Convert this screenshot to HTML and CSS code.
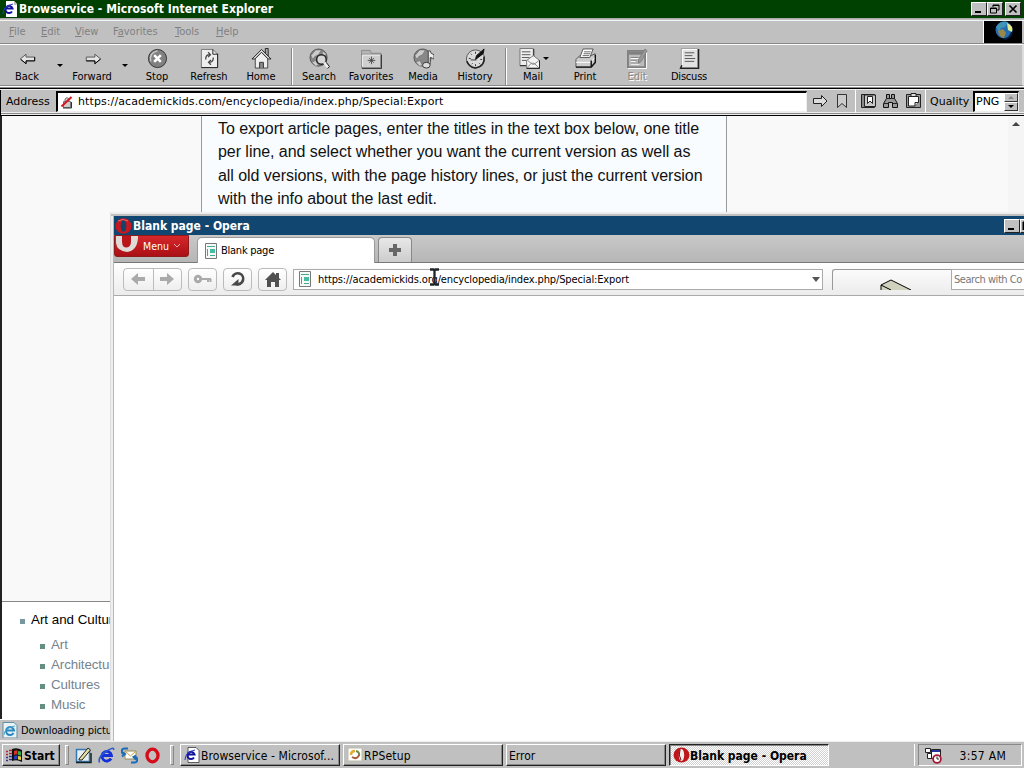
FILE: index.html
```
<!DOCTYPE html>
<html lang="en"><head><meta charset="utf-8"><title>Desktop</title><link rel="stylesheet" href="styles.css"></head>
<body>
<div class="desktop">
<main class="ie">
 <header class="title ie-title">
  <svg width="16" height="16" viewBox="0 0 16 16"><path d="M4 0h8l3 3v13H4z" fill="#fff"/><path d="M12 0v4h3" fill="#bbb"/><path d="M10 10.5A3.600 3.600 0 1 1 10.500 7.500H4" fill="none" stroke="#11129b" stroke-width="2"/><path d="M1 13Q1 5 11 3" fill="none" stroke="#2837cf"/></svg>
  <span class="t-ie">Browservice - Microsoft Internet Explorer</span>
  <div class="wbtns"><i><svg width="14" height="12"><path d="M3 9h6" stroke="#000" stroke-width="2"/></svg></i><i><svg width="14" height="12"><path d="M5 4V2h6v5H9M5 2.500h6M2.500 5h6v5h-6zM2 5.500h7" fill="none" stroke="#000"/></svg></i><i class="x"><svg width="14" height="12"><path d="M3.500 2.500l7 7m0-7l-7 7" stroke="#000" stroke-width="1.700"/></svg></i></div>
 </header>
 <nav class="menu"><div class="items"><span><u>F</u>ile</span><span><u>E</u>dit</span><span><u>V</u>iew</span><span>F<u>a</u>vorites</span><span><u>T</u>ools</span><span><u>H</u>elp</span></div>
  <div class="throb"><svg width="38" height="22"><circle cx="20" cy="9" r="8.500" fill="#246db0"/><path d="M12 6q5-7 12-5l-3 5-4 1-2 4z" fill="#3f94b8"/><path d="M14 10l5-2 3 4-2 5q-5-1-6-7" fill="#9a874b"/><path d="M23 2q7 3 5 9l-4-2z" fill="#e4ec8d"/><path d="M28 11q-2 7-8 7" stroke="#081c3c" stroke-width="2" fill="none"/></svg></div></nav>
 <div class="tools">
  <div class="tb"><svg viewBox="0 0 22 22"><path d="M3.500 11.500l6-5v3h9v4h-9v3z" fill="#e4e4e4" stroke="#555"/><path d="M4 12l5.500 4.500v-3h9v-4" fill="none" stroke="#000"/></svg><b>Back</b></div><div class="dd"></div>
  <div class="tb"><svg viewBox="0 0 22 22"><path d="M19.500 11.500l-6-5v3h-9v4h9v3z" fill="#e4e4e4" stroke="#555"/><path d="M19.500 11.500l-6 5v-3h-9" fill="none" stroke="#000"/></svg><b>Forward</b></div><div class="dd"></div>
  <div class="tb"><svg viewBox="0 0 22 22"><circle cx="11" cy="11" r="9.500" fill="#808080" stroke="#333"/><path d="M4 14Q2 5 11 3" fill="none" stroke="#ccc" stroke-width="1.500"/><path d="M7.500 7.500l7 7m0-7l-7 7" stroke="#fff" stroke-width="2.700"/></svg><b>Stop</b></div>
  <div class="tb"><svg viewBox="0 0 22 22"><path d="M2.500 1.500h12l5 5v14h-17z" fill="#eee" stroke="#777"/><path d="M19.500 6v14.500h-17M14.500 1.500v5h5" fill="none" stroke="#222"/><path d="M7 12q0-5 4-5m-1.500-2.500L12 7l-2.500 2.500M15 10q0 5-4 5m1.500-2.500L10 15l2.500 2.500" fill="none" stroke="#444" stroke-width="1.300"/></svg><b>Refresh</b></div>
  <div class="tb"><svg viewBox="0 0 22 22"><path d="M15 6V.5h3v8" fill="#aaa" stroke="#222"/><path d="M4.500 11v10h13V11L11 4z" fill="#eee" stroke="#444"/><path d="M1 11.500L11 1.500l10 10h-3l-7-7-7 7z" fill="#ddd" stroke="#222"/><path d="M9 21v-6h4v6" fill="#888" stroke="#333"/></svg><b>Home</b></div>
  <div class="sep"></div>
  <div class="tb"><svg viewBox="0 0 22 22"><circle cx="10" cy="10" r="9" fill="#888" stroke="#555"/><path d="M2 8l5-6h6l-3 5-4 2-2 3zM3 15l4-2 3 5-3 1zM14 3l4 3-1 4-3-3z" fill="#ccc" stroke="#666" stroke-width=".6"/><circle cx="13" cy="12" r="5" fill="#d7d7d7" stroke="#222" stroke-width="1.500"/><path d="M16 15l4 5" stroke="#eee" stroke-width="3"/><path d="M18 15l3.500 4.500-2 2" stroke="#111" fill="none"/></svg><b>Search</b></div>
  <div class="tb"><svg viewBox="0 0 22 22"><path d="M.5 6V2.500h9l1.500 3h10v15H.5z" fill="#b5b5b5" stroke="#888"/><path d="M.5 6.500h20v14H.5z" fill="#cfcfcf" stroke="#888"/><path d="M1.500 19V7.500H20" fill="none" stroke="#eee"/><path d="M21.500 7v14.500H1" stroke="#333" fill="none"/><path d="M11 9v8m-4-4h8m-6.500-2.500l5 5m0-5l-5 5" stroke="#444" stroke-width=".9"/></svg><b>Favorites</b></div>
  <div class="tb"><svg viewBox="0 0 22 22"><circle cx="10" cy="10" r="9" fill="#888" stroke="#555"/><path d="M2 8l5-6h6l-3 5-4 2-2 3zM3 15l4-2 3 5-3 1z" fill="#ccc" stroke="#666" stroke-width=".6"/><path d="M16 17V3h2q0 3 4 4v5q-1-2-4-2v7" stroke="#333" fill="#eee" stroke-width=".9"/><ellipse cx="14" cy="18" rx="4" ry="3" fill="#ddd" stroke="#333"/></svg><b>Media</b></div>
  <div class="tb"><svg viewBox="0 0 22 22"><circle cx="11" cy="11.500" r="9.500" fill="#dadada" stroke="#555"/><path d="M20 9q1 10-9 12-7-1-9-7" fill="none" stroke="#222" stroke-width="1.700"/><path d="M11 4v2m0 11v2M4 11h2m10 1h2M6 6l1 1m0 10l1-1m7 0l1 1" stroke="#333"/><path d="M11 12l1-4 8-7-1 5z" fill="#111" stroke="#111"/><path d="M6 12.500h6" stroke="#333"/></svg><b>History</b></div>
  <div class="sep s2"></div>
  <div class="tb mail"><svg viewBox="0 0 22 22"><path d="M1 .5h14v18H1z" fill="#eee" stroke="#777"/><path d="M15.500 1v9M1 18.500h7" stroke="#222"/><path d="M3 4h9M3 7h9M3 10h8M3 13h6" stroke="#555"/><path d="M8 13l7-5 6.500 5v8H8z" fill="#f4f4f4" stroke="#777"/><path d="M8 21l5-5h3l5 5M9 13l5 4h2l5-4" fill="none" stroke="#888"/><path d="M21.500 13v8.500H8" fill="none" stroke="#222"/></svg><b>Mail</b><em class="dd"></em></div>
  <div class="tb"><svg viewBox="0 0 22 22"><path d="M1 12l4-4h12l4-2v9l-4 5H1z" fill="#ccc" stroke="#555"/><path d="M5 10L8.500 1H19l-3.500 9z" fill="#fff" stroke="#555"/><path d="M9.500 4h7M9 6h7M8 8h7" stroke="#666"/><path d="M1 15h15l5-5" fill="none" stroke="#fff"/><path d="M1 20h16l4.500-5V7M17 13v7" fill="none" stroke="#111" stroke-width="1.500"/></svg><b>Print</b></div>
  <div class="tb off"><svg viewBox="0 0 22 22"><path d="M1 3h18v17H1z" fill="#bbb" stroke="#808080" stroke-width="2"/><path d="M2 4h17v3H2z" fill="#808080"/><path d="M4 10h8m-8 3h6m-6 3h9" stroke="#808080"/><path d="M19 1l-7 11v4l3-2 6-11z" stroke="#808080" fill="#999"/><path d="M20.500 5v16.500H1M4 11h8m-8 3h5m-5 3h9" fill="none" stroke="#fff"/></svg><b>Edit</b></div>
  <div class="tb disc"><svg viewBox="0 0 22 22"><path d="M2.500.5h17v20h-17z" fill="#e2e2e2" stroke="#999"/><path d="M3.500 18V1.500H19" fill="none" stroke="#fff"/><path d="M20.500 1v20.500H1.500L3 18" fill="none" stroke="#222" stroke-width="1.500"/><path d="M6 5h10M6 8h8M6 11h11M6 14h10" stroke="#555"/></svg><b>Discuss</b></div>
 </div>
 <div class="addr"><span class="addr-label">Address</span>
  <div class="field"><svg width="14" height="14"><path d="M3.500 6.500h7v6h-7zM5 6V4q2-3 4 0v2" fill="#ccc" stroke="#777"/><path d="M1.500 11.500l10-9.500" stroke="#d51622" stroke-width="2"/><path d="M3 13h8.500V7" stroke="#333" fill="none"/></svg><span class="url1">https://academickids.com/encyclopedia/index.php/Special:Export</span></div>
  <svg class="aicon go" width="17" height="16"><path d="M1.500 5.500h8v-3l5.500 5.500-5.500 5.500v-3h-8z" fill="#ddd" stroke="#222"/></svg>
  <svg class="aicon bm" width="12" height="16"><path d="M1.500 1.500h9v13L6 10.500l-4.500 4z" fill="#ccc" stroke="#333"/></svg>
  <div class="vsep"></div>
  <svg class="aicon bk" width="16" height="16"><path d="M.5 1.500h13v13H.5z" fill="#888" stroke="#222"/><path d="M3.500 2v11.500h11V2z" fill="#c8c8c8" stroke="#222"/><path d="M6.500 3.500h5v7L9 8l-2.500 2.500z" fill="#fff" stroke="#222"/></svg>
  <svg class="aicon bi" width="18" height="16"><path d="M4.500 1.500h3v4h2v-4h3v4l3 5v4h-5v-5h-4v5h-5v-4l3-5z" fill="#999" stroke="#111"/><path d="M2 10.500h4m5 0h4M5 5.500h3m2 0h3" stroke="#222"/></svg>
  <svg class="aicon cp" width="16" height="16"><path d="M.5 1.500h14v13H.5z" fill="#999" stroke="#222"/><path d="M2.500 3.500h10v6l-3.500 3.500H2.500z" fill="#fff" stroke="#222"/><path d="M5 .500h5v3H5zM9 13V9.500h3.500" fill="#ddd" stroke="#222"/></svg>
  <div class="vsep v2"></div><span class="quality">Quality</span><div class="png"><span>PNG</span><div class="spin"><i class="up"></i><i class="dn"></i></div></div>
 </div>
 <section class="view">
  <article><p>To export article pages, enter the titles in the text box below, one title<br>per line, and select whether you want the current version as well as<br>all old versions, with the page history lines, or just the current version<br>with the info about the last edit.</p></article>
  <div class="scroll"></div>
  <div class="topics"><div class="head">Art and Culture</div><ul><li>Art</li><li>Architecture</li><li>Cultures</li><li>Music</li></ul></div>
 </section>
 <footer class="status"><svg width="16" height="16"><path d="M1 .5h11l3 3V16H1z" fill="#e9f2f5" stroke="#628da3"/><path d="M11.500 11A4 4 0 1 1 12 8.500H5" stroke="#2988bd" stroke-width="2" fill="none"/><path d="M2 13Q2 6 13 4" fill="none" stroke="#4aa3d0"/></svg><span>Downloading picture</span></footer>
</main>
<section class="opera">
 <header class="title op-title"><svg width="17" height="16"><ellipse cx="8.500" cy="8" rx="8" ry="7.800" fill="#c51820"/><ellipse cx="8.500" cy="8" rx="2.800" ry="6" fill="#12446c"/><path d="M3 3q5-3 10 0" stroke="#f06a68" fill="none"/></svg><span class="t-op">Blank page - Opera</span><div class="wbtns"><i><svg width="14" height="12"><path d="M3 9h6" stroke="#000" stroke-width="2"/></svg></i><i><svg width="14" height="12"><path d="M2.500 2v8M2 2.500h9" stroke="#000" stroke-width="2"/></svg></i></div></header>
 <div class="tabs"><div class="omenu"><svg width="24" height="17"><path d="M1 0h22v2q-1 13-11 14Q2 15 1 7z" fill="#dedbd8"/><path d="M7 0h9v5q0 6-4.500 6.500T7 5z" fill="#bb151c"/></svg><span>Menu</span><svg width="8" height="6"><path d="M1 1l3 3 3-3" fill="none" stroke="#edb0a8"/></svg></div>
  <div class="tab"><svg class="page" width="12" height="16"><path d="M.5.5h11v15H.5z" fill="#f5faf8" stroke="#777"/><path d="M2 3.500h8M2.500 6v7M5 12.500h5" stroke="#45a98f"/><path d="M5 6h5v4H5z" fill="#45bda0"/></svg><span>Blank page</span></div>
  <div class="plus"><svg width="12" height="12"><path d="M6 0v12M0 6h12" stroke="#666" stroke-width="4"/></svg></div></div>
 <div class="obar">
  <div class="ob pair"><span><svg width="16" height="14"><path d="M1 7l7-6v4h7v4H8v4z" fill="#aaa"/></svg></span><span><svg width="16" height="14"><path d="M15 7L8 1v4H1v4h7v4z" fill="#aaa"/></svg></span></div>
  <div class="ob"><svg width="20" height="12"><circle cx="5" cy="6" r="2.700" fill="none" stroke="#aaa" stroke-width="3"/><path d="M8 6h10m-3 0v3m2.500-3v3" stroke="#aaa" stroke-width="2"/></svg></div>
  <div class="ob"><svg width="18" height="18"><path d="M3.500 7a5.500 5.500 0 1 1 3.500 7" fill="none" stroke="#484848" stroke-width="2.700"/><path d="M2 15.500h7.500V9z" fill="#484848"/></svg></div>
  <div class="ob"><svg width="18" height="17"><path d="M9 1L1 9h2v7h4v-5h4v5h4V9h2l-2-2V2h-3v2z" fill="#505050"/></svg></div>
  <div class="ofield"><svg class="page" width="12" height="16"><path d="M.5.5h11v15H.5z" fill="#f5faf8" stroke="#777"/><path d="M2 3.500h8M2.500 6v7M5 12.500h5" stroke="#45a98f"/><path d="M5 6h5v4H5z" fill="#45bda0"/></svg><span class="url2">https://academickids.org/encyclopedia/index.php/Special:Export</span><i></i></div>
  <div class="panel"><svg width="34" height="12"><path d="M1 12V6l10-5 20 10z" fill="#d0d2bd"/><path d="M1 12V6l10-5 20 10M1 6l10 5" fill="none" stroke="#000"/></svg></div>
  <div class="search">Search with Co</div>
 </div>
 <svg class="cursor" width="9" height="18"><path d="M0 1.500h3.500l1 1 1-1H9M4.500 2v14M0 16.500h3.500l1-1 1 1H9" fill="none" stroke="#1b2528" stroke-width="2.300"/></svg>
</section>
<footer class="taskbar">
 <div class="start"><svg width="17" height="16"><path d="M6 2q5-2 10 1v12q-5-3-10-1z" fill="#111"/><path d="M8 4q2-1 3.500-.5v4Q10 7 8 8z" fill="#d43222"/><path d="M12 4l3 .5v4l-3-.5z" fill="#35a94a"/><path d="M8 9q2-1 3.500-.5V12L8 12.500z" fill="#283dbc"/><path d="M12 9l3 .5V13l-3-.5z" fill="#e6d038"/><path d="M0 4.500h2m1-1h3M0 7.500h2m1-1h3" stroke="#b02738" stroke-width="1.500"/><path d="M0 10.500h2m1-1h3M0 13.500h2m1-1h3" stroke="#30308c" stroke-width="1.500"/></svg><span>Start</span></div>
 <div class="grip"></div>
 <div class="quick">
 <svg width="17" height="17"><path d="M1.500 2.500h13v12h-13z" fill="#e7eef0" stroke="#3479b5" stroke-width="1.500"/><path d="M4 12L13 1l2.500 2L7 13H4z" fill="#e8dfa5" stroke="#222"/><path d="M1 15.500h15V6" fill="none" stroke="#122" stroke-width="1.500"/></svg>
 <svg width="17" height="17"><path d="M13 11.500A4.800 4.800 0 1 1 13.500 8.500H5" fill="none" stroke="#1530d9" stroke-width="2.800"/><path d="M1.500 15.500Q-.5 10 8 4.500T15.500 3" fill="none" stroke="#2557cf" stroke-width="1.500"/></svg>
 <svg width="17" height="17"><path d="M4 4h11v8H4z" fill="#fff" stroke="#998b55"/><path d="M4 4l5.500 5L15 4" fill="none" stroke="#c4a33d"/><path d="M7 1.500H3.500A2.500 2.500 0 0 0 3.500 7M1 5l3 2-3 2.500M10 15.500h3.500a2.500 2.500 0 0 0 0-5.500M15 8.500L12.500 10l2.500 2.500" fill="none" stroke="#1c6cb7" stroke-width="2"/></svg>
 <svg width="17" height="17"><ellipse cx="8.500" cy="8.500" rx="5.500" ry="6.300" fill="none" stroke="#d70b19" stroke-width="3.300"/></svg></div>
 <div class="grip g2"></div>
 <div class="task a"><svg width="16" height="16"><path d="M4 .5h8l3 3V15.500H4z" fill="#fff" stroke="#222" stroke-width=".7"/><path d="M10 10.500A3.600 3.600 0 1 1 10.500 7.500H4" fill="none" stroke="#11129b" stroke-width="2"/><path d="M1 13Q1 5 11 3" fill="none" stroke="#2837cf"/></svg><span class="k1">Browservice - Microsof...</span></div>
 <div class="task b"><svg width="16" height="16"><path d="M1 1h14v13H1z" fill="#fff" stroke="#bba"/><path d="M4 8q0-4 4-4" stroke="#e5a931" stroke-width="2.500" fill="none"/><path d="M9 4q4 1 3 5" stroke="#698b4c" stroke-width="2" fill="none"/><path d="M12 8q-2 5-7 2" stroke="#a65b39" stroke-width="2" fill="none"/></svg><span class="k2">RPSetup</span></div>
 <div class="task c"><span class="k3">Error</span></div>
 <div class="task active"><svg width="17" height="16"><ellipse cx="8.500" cy="8" rx="8" ry="7.500" fill="#bd171c"/><ellipse cx="8.500" cy="8" rx="2.700" ry="6" fill="#eee"/><path d="M7 3q-2 5 1 10" stroke="#611" fill="none"/></svg><span class="k4">Blank page - Opera</span></div>
 <div class="tray"><svg width="17" height="17"><path d="M.5 1.500h5v4h-5zM6.500 2.500h9v9h-9zM2.500 6.500h4v5h-4z" fill="#fff" stroke="#222"/><path d="M7 4h8" stroke="#239" stroke-width="2"/><circle cx="12" cy="12" r="3.900" fill="#fff" stroke="#a31a38" stroke-width="1.800"/><path d="M12 9.500V12h2" stroke="#222" fill="none"/></svg><span>3:57 AM</span></div>
</footer>
</div></body></html>
```
FILE: styles.css
```
*{box-sizing:border-box}
body{margin:0;width:1024px;height:768px;overflow:hidden;background:#c0c0c0;font:11px "DejaVu Sans Condensed","DejaVu Sans",sans-serif;color:#000}
svg{display:block;flex:none}
span{white-space:nowrap}
.desktop{position:relative;display:flex;flex-direction:column;width:1024px;height:768px;overflow:hidden}
.ie{height:741px;display:flex;flex-direction:column;background:#c0c0c0}
.title{height:18px;display:flex;align-items:center;color:#fff;font-weight:bold;font-size:12px;flex:none}
.ie-title{background:#004000;padding:0 3px 0 2px;gap:1px}
.t-ie{letter-spacing:.05px}
.wbtns{margin-left:auto;display:flex}
.wbtns i{width:16px;height:14px;background:#c0c0c0;border:1px solid;border-color:#fff #222 #222 #fff}
.wbtns .x{margin-left:2px}
.menu{height:26px;border-top:1px solid #aaa;border-bottom:1px solid #888;display:flex;padding:2px 2px 0 9px;box-shadow:inset 0 1px #c0c0c0,inset 0 2px #f4f4f4}
.items{display:flex;color:#808080;padding-top:4px;flex:1;border-right:1px solid #fff}
.items span:nth-child(1){width:32px}.items span:nth-child(2){width:34px}.items span:nth-child(3){width:38px}.items span:nth-child(4){width:62px}.items span:nth-child(5){width:41px}
.throb{background:#000;width:38px;overflow:hidden}
.tools{height:42px;display:flex;border-top:1px solid #fff;border-bottom:1px solid #888;padding:3px 0 0 1px;border-right:2px solid #ddd}
.tb{width:52px;display:flex;flex-direction:column;align-items:center;position:relative}
.tb>svg{width:21px;height:21px}
.tb b{font-weight:normal;line-height:13px;margin-top:1px}
.disc b{letter-spacing:-.2px}
.dd{width:13px}.dd:after{content:"";display:block;margin:16px auto 0;width:0;border:3px solid transparent;border-top-color:#000;border-bottom:0}
.mail .dd{position:absolute;right:7px;top:-7px}.mail svg{margin-right:8px}
.off b{color:#888;text-shadow:1px 1px #fff}
.sep{width:6px;border-right:1px solid #fff;box-shadow:inset -1px 0 #888}
.addr{height:30px;border-top:1px solid #fff;background:#c0c0c0;border-bottom:1px solid #000;display:flex;align-items:center;padding:3px 0 3px 6px;box-shadow:inset 0 1px #888,inset 0 2px #000,inset 0 3px #eee,inset 1px 0 #000,inset 0 -1px #eee,inset 0 -2px #888,inset 0 -3px #eee;font-family:"DejaVu Sans",sans-serif}
.addr>*{flex:none}
.addr-label{width:50px}
.field{width:751px;height:21px;background:#fff;border:1px solid #000;border-top-width:2px;border-left-width:2px;border-right-color:#eee;border-bottom-color:#eee;display:flex;align-items:center;padding-left:2px;gap:4px}
.url1{letter-spacing:.1px}
.go{margin-left:5px}.bm{margin-left:7px}.vsep{width:1px;height:23px;background:#fff;margin-left:7px;margin-right:5px}.bi{margin-left:5px}.cp{margin-left:6px}.v2{margin-left:3px;margin-right:4px}
.quality{width:43px}.png{width:46px;height:21px;border:2px solid #000;border-right:1px solid #eee;border-bottom:1px solid #eee;background:#fff;display:flex;align-items:center;justify-content:space-between;padding-left:1px}
.spin{width:14px}.spin i{display:block;height:9px;background:#c0c0c0;border:1px solid;border-color:#fff #333 #333 #fff}.spin i:after{content:"";display:block;margin:2px auto;width:0;border:3px solid transparent}.spin .up:after{border-top:0;border-bottom-color:#888}.spin .dn:after{border-bottom:0;border-top-color:#000}
.view{flex:1;background:#f9f9f9;border-left:2px solid #222;display:grid;grid-template:485px 1fr / 199px 526px 1fr;overflow:hidden}
article{grid-column:2;background:#f8fcff;border:1px solid #999;border-top:0;font:16px/23.3px "Liberation Sans",sans-serif;color:#111}
article p{margin:1px 0 0 16px;white-space:nowrap;letter-spacing:-.05px}
.scroll{grid-column:3;grid-row:1;justify-self:end;width:16px;background:#f5f5f5}.scroll:after{content:"";display:block;margin:6px 4px;width:0;border:4px solid transparent;border-top:0;border-bottom-color:#444}
.topics{grid-column:1/4;border-top:1px solid #888;background:#fff;font:13.33px/20px "Liberation Sans",sans-serif;padding:8px 0 0 18px}
.head:before,li:before{content:"";display:inline-block;width:5px;height:5px;background:#7897a0;margin-right:6px}
.topics ul{list-style:none;margin:5px 0 0;padding:0 0 0 20px;color:#75838e}.topics li:before{background:#649080;margin-right:6px}
.topics li{letter-spacing:-.1px}
.status{height:22px;border-top:1px solid #fff;border-bottom:1px solid #eee;display:flex;align-items:center;padding:0 2px;gap:3px;flex:none;letter-spacing:-.08px}
.opera{position:absolute;left:110px;top:212px;width:914px;height:529px;background:#fff;border-left:1px solid #ddd;border-top:2px solid #eee;display:flex;flex-direction:column;padding-left:3px;overflow:hidden;box-shadow:inset 0 2px #c0c0c0,inset 2px 0 #eee,inset 3px 0 #b8b8b8}
.op-title{height:19px;margin-top:2px;background:#10466f;padding-left:1px;gap:1px}.op-title .wbtns{width:20px;overflow:hidden;height:14px}.op-title .wbtns i{flex:none}
.tabs{height:28px;flex:none;background:linear-gradient(#c8c8c8,#b6b6b6);display:flex;border-bottom:1px solid #777;align-items:flex-start}
.omenu{width:75px;height:22px;background:linear-gradient(#d6272b,#aa1016);border:1px solid #8d1b1c;border-radius:0 0 3px 3px;display:flex;color:#fff;align-items:center;gap:4px;overflow:hidden;font-size:10.500px}.omenu svg:first-child{align-self:flex-start}
.tab{margin:2px 0 0 8px;width:178px;height:26px;background:#fff;border:1px solid #999;border-bottom:0;border-radius:5px 5px 0 0;display:flex;align-items:center;padding-left:7px;gap:4px;letter-spacing:-.25px}
.plus{margin:2px 0 0 3px;width:34px;height:25px;border:1px solid #888;border-bottom:0;border-radius:4px 4px 0 0;background:linear-gradient(#e8e8e8,#ccc);display:grid;place-items:center}
.obar{height:33px;flex:none;background:linear-gradient(#fff,#ececec);border-bottom:1px solid #aaa;display:flex;align-items:center;padding-left:9px}
.obar>*{flex:none}
.ob{width:29px;height:23px;border:1px solid #bbb;border-radius:4px;display:grid;place-items:center;background:linear-gradient(#fff,#eee);margin-right:6px}.pair{width:59px;grid-template-columns:1fr 1fr;gap:0}.pair span{height:21px;width:100%;display:grid;place-items:center}.pair span+span{border-left:1px solid #bbb}
.ofield{width:530px;height:21px;border:1px solid #aaa;background:#fff;display:flex;align-items:center;padding-left:5px;gap:7px}.ofield i{margin-left:auto;margin-right:2px;border:4px solid transparent;border-top:5px solid #555;border-bottom:0}
.url2{letter-spacing:-.12px}
.panel{width:119px;height:21px;border:1px solid #999;border-bottom:0;border-right:0;border-radius:3px 0 0;margin-left:9px;padding:9px 0 0 47px;overflow:hidden}
.search{width:80px;height:21px;border:1px solid #aaa;border-right:0;background:#fff;color:#777;padding:3px 0 3px 2px;white-space:nowrap;letter-spacing:-.45px}
.cursor{position:absolute;left:319px;top:54px}
.taskbar{height:27px;background:#c0c0c0;border-top:1px solid #eee;display:flex;padding:2px}
.taskbar span{position:relative;top:1px}
.start,.task{border:1px solid;border-color:#fff #222 #222 #fff;box-shadow:inset -1px -1px #888;display:flex;align-items:center}
.start{width:58px;padding-left:3px;font-weight:bold;gap:1px;font-size:12px}
.grip{width:4px;border:1px solid;border-color:#fff #888 #888 #fff;margin-left:5px;height:20px;align-self:center}
.quick{display:flex;gap:6px;align-items:center;margin-left:6px}.g2{margin-left:9px}
.task{width:160px;padding-left:3px;margin-right:3px;font-size:12px}.a{margin-left:6px}
.a,.b{gap:1px}.k1{letter-spacing:.08px}.k2{letter-spacing:.2px}.c{padding-left:2px}
.active{border-color:#222 #fff #fff #222;background:repeating-conic-gradient(#fff 0 25%,#d0d0d0 0 50%) 0 0/2px 2px;font-weight:bold;box-shadow:inset 1px 1px #888}
.tray{margin-left:auto;width:104px;border:1px solid;border-color:#888 #fff #fff #888;box-shadow:-3px 0 #c0c0c0,-4px 0 #fff;display:flex;align-items:center;justify-content:space-between;padding:0 15px 0 6px;font-size:12px;letter-spacing:.3px}
```
